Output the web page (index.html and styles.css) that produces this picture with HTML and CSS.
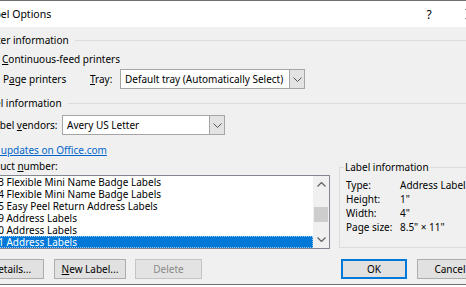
FILE: index.html
```html
<!DOCTYPE html>
<html>
<head>
<meta charset="utf-8">
<link rel="stylesheet" href="styles.css">
</head>
<body>
<div class="window">
  <div class="titlebar">
    <span class="title">Label Options</span>
    <span class="tb-btn tb-help">?</span>
    <span class="tb-btn tb-close"><svg width="10" height="10" viewBox="0 0 10 10"><path d="M0.5 0.5L9.5 9.5M9.5 0.5L0.5 9.5" stroke="#000" stroke-width="1" fill="none"/></svg></span>
  </div>
  <div class="content">
    <div class="group-head"><span>Printer information</span><span class="rule"></span></div>
    <div class="radio-row first">
      <span class="radio"></span>
      <span class="radio-label"><u>C</u>ontinuous-feed printers</span>
    </div>
    <div class="radio-row second">
      <span class="radio checked"><span class="dot"></span></span>
      <span class="radio-label page-label">P<u>a</u>ge printers</span>
      <span class="tray-label"><u>T</u>ray:</span>
      <div class="combo combo-tray">
        <span class="combo-text">Default tray (Automatically Select)</span>
        <span class="combo-btn"><svg width="9" height="5" viewBox="0 0 9 5"><path d="M0.5 0.5L4.5 4.5L8.5 0.5" stroke="#555" fill="none"/></svg></span>
      </div>
    </div>
    <div class="group-head second-head"><span>Label information</span><span class="rule"></span></div>
    <div class="vendor-row">
      <span class="vendor-label">Label <u>v</u>endors:</span>
      <div class="combo combo-vendor">
        <span class="combo-text">Avery US Letter</span>
        <span class="combo-btn"><svg width="9" height="5" viewBox="0 0 9 5"><path d="M0.5 0.5L4.5 4.5L8.5 0.5" stroke="#555" fill="none"/></svg></span>
      </div>
    </div>
    <div class="link-row"><a class="link">Find updates on Office.com</a></div>
    <div class="main-row">
      <div class="product-col">
        <div class="product-label">Product <u>n</u>umber:</div>
        <div class="listbox">
          <div class="items">
            <div class="item">5153 Flexible Mini Name Badge Labels</div>
            <div class="item">5154 Flexible Mini Name Badge Labels</div>
            <div class="item">5155 Easy Peel Return Address Labels</div>
            <div class="item">5159 Address Labels</div>
            <div class="item">5160 Address Labels</div>
            <div class="item selected">5161 Address Labels</div>
          </div>
          <div class="scrollbar">
            <div class="sb-arrow"><svg width="9" height="5" viewBox="0 0 9 5"><path d="M0.5 4.5L4.5 0.5L8.5 4.5" stroke="#606060" stroke-width="1.2" fill="none"/></svg></div>
            <div class="sb-track"><div class="sb-thumb" style="margin-top:14px"></div></div>
            <div class="sb-arrow"><svg width="9" height="5" viewBox="0 0 9 5"><path d="M0.5 0.5L4.5 4.5L8.5 0.5" stroke="#606060" stroke-width="1.2" fill="none"/></svg></div>
          </div>
        </div>
      </div>
      <fieldset class="info">
        <legend>Label information</legend>
        <div class="info-grid">
          <span>Type:</span><span>Address Labels</span>
          <span>Height:</span><span>1"</span>
          <span>Width:</span><span>4"</span>
          <span>Page size:</span><span>8.5" × 11"</span>
        </div>
      </fieldset>
    </div>
    <div class="buttons">
      <div class="btn-group">
        <button class="btn btn-details"><u>D</u>etails...</button>
        <button class="btn btn-new"><u>N</u>ew Label...</button>
        <button class="btn btn-delete" disabled>Delete</button>
      </div>
      <div class="btn-group right">
        <button class="btn btn-ok">OK</button>
        <button class="btn btn-cancel">Cancel</button>
      </div>
    </div>
  </div>
</div>
</body>
</html>
```

FILE: styles.css
```css
* { box-sizing: border-box; }
html, body { margin: 0; padding: 0; }
body {
  width: 466px;
  height: 287px;
  overflow: hidden;
  background: #ffffff;
  font-family: "Noto Sans", "Open Sans", sans-serif;
  font-size: 10px;
  color: #000;
}
u { text-decoration: underline; text-underline-offset: 1px; }
.window {
  margin-left: -34px;
  width: 527px;
  border-top: 1px solid #707070;
  border-bottom: 1px solid #707070;
  background: #f0f0f0;
}
.titlebar {
  height: 26px;
  background: #ffffff;
  display: flex;
  align-items: center;
}
.title { flex: 1; padding-left: 17px; font-size: 10.5px; line-height: 14px; }
.tb-btn { height: 26px; display: flex; align-items: center; justify-content: center; }
.tb-help { width: 36px; font-size: 12px; }
.tb-close { width: 46px; }
.content {
  padding: 6px 10px 5px 12px;
  display: flex;
  flex-direction: column;
}
.group-head {
  display: flex;
  align-items: center;
  height: 14px;
  line-height: 14px;
}
.second-head { margin-top: 7px; }
.rule { flex: 1; height: 1px; background: #dcdcdc; margin-left: 6px; }
.radio-row { display: flex; align-items: center; }
.radio-row.first { height: 14px; margin-top: 5px; }
.radio-row.second { height: 20px; margin-top: 3px; }
.radio {
  width: 13px; height: 13px; border-radius: 50%;
  border: 1px solid #333; background: #fff;
  margin-left: 4px; margin-right: 7px;
  display: flex; align-items: center; justify-content: center;
}
.radio .dot { width: 7px; height: 7px; border-radius: 50%; background: #333; }
.radio-label { line-height: 14px; }
.second .radio-label { margin-left: 1px; }
.page-label { width: 87px; }
.tray-label { width: 30px; }
.combo {
  height: 20px;
  display: flex;
  border: 1px solid #a5a5a5;
  background: #fff;
}
.combo-tray { width: 185px; }
.combo-text { flex: 1; padding-left: 4px; line-height: 18px; white-space: nowrap; overflow: hidden; }
.combo-btn {
  width: 15px;
  background: #e3e3e3;
  border-left: 1px solid #a5a5a5;
  display: flex; align-items: center; justify-content: center;
}
.vendor-row { display: flex; align-items: center; height: 20px; margin-top: 5px; padding-left: 11px; }
.vendor-label { width: 73px; }
.combo-vendor { width: 163px; }
.link-row { margin-top: 8px; height: 14px; line-height: 14px; }
.link { color: #0066cc; text-decoration: underline; }
.main-row { display: flex; margin-top: 2px; gap: 9px; }
.product-col { width: 352px; display: flex; flex-direction: column; }
.product-label { height: 14px; line-height: 14px; margin-bottom: 2px; }
.listbox {
  height: 74px;
  border: 1px solid #828790;
  background: #fff;
  display: flex;
}
.items { flex: 1; display: flex; flex-direction: column; }
.item { height: 12px; line-height: 12px; padding-left: 2px; white-space: nowrap; }
.item.selected { background: #0078d7; color: #fff; outline: 1px dotted #9cc8ee; outline-offset: -1px; }
.scrollbar { width: 16px; background: #f0f0f0; display: flex; flex-direction: column; }
.sb-arrow { height: 17px; display: flex; align-items: center; justify-content: center; }
.sb-track { flex: 1; }
.sb-thumb { height: 15px; margin-left: 1px; margin-right: 1px; background: #cdcdcd; }
.info {
  margin: 1px 0 0 0;
  padding: 0;
  width: 144px;
  height: 88px;
  border: 1px solid #dcdcdc;
  min-width: 0;
}
.info legend { padding: 0 1px; margin-left: 4px; line-height: 14px; }
.info-grid {
  display: grid;
  grid-template-columns: 54px auto;
  grid-auto-rows: 14px;
  line-height: 14px;
  margin-top: 4px;
  margin-left: 6px;
  white-space: nowrap;
}
.buttons { display: flex; justify-content: space-between; margin-top: 10px; }
.btn-group { display: flex; gap: 10px; }
.btn-group.right { gap: 10px; }
.btn {
  height: 20px;
  font-family: inherit;
  font-size: 10px;
  color: #000;
  background: #e1e1e1;
  border: 1px solid #adadad;
  padding: 0;
  margin: 0;
}
.btn-details { width: 66px; }
.btn-new { width: 72px; }
.btn-delete { width: 67px; margin-left: -1px; background: #e3e3e3; border-color: #c4c4c4; color: #8a8a8a; }
.btn-ok { width: 66px; border: 2px solid #0078d7; }
.btn-cancel { width: 66px; }
```
